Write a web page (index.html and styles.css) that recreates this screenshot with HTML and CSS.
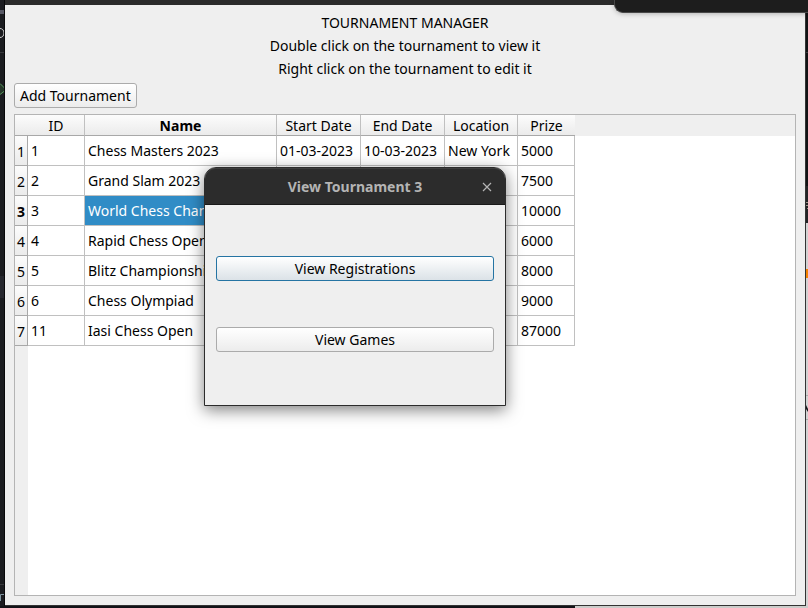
FILE: index.html
```html
<!DOCTYPE html>
<html lang="en">
<head>
<meta charset="utf-8">
<title>Tournament Manager</title>
<link rel="stylesheet" href="styles.css">
</head>
<body>
<div class="desktop">
  <svg class="edge edge-left" width="5" height="608" aria-hidden="true">
    <rect width="5" height="608" fill="#1b1c20"/>
    <rect y="10" width="4" height="4" fill="#585965"/>
    <path d="M0 28.500C2 28.500 4 30 4 33s-2 4.500-4 4.500" fill="none" stroke="#d0d0d0"/>
    <rect y="52" width="4" height="1" fill="#38393d"/>
    <path d="M0 83.500L4.500 88v3L0 94.500" fill="#253629" stroke="#57965c"/>
    <rect y="276" width="4" height="22" fill="#26272e"/>
    <rect y="584" width="4" height="1" fill="#38393d"/>
    <path d="M.5 601v-6.500H4" fill="none" stroke="#7f95a0"/>
    <rect x="4" width="1" height="608" fill="#08080a"/>
  </svg>
  <main class="window">
    <header class="intro">
      <div>TOURNAMENT MANAGER</div>
      <div>Double click on the tournament to view it</div>
      <div>Right click on the tournament to edit it</div>
    </header>
    <button class="button add" type="button">Add Tournament</button>
    <div class="frame">
      <table class="grid">
        <colgroup><col class="c-row"><col class="c-id"><col class="c-name"><col class="c-date"><col class="c-date"><col class="c-place"><col class="c-prize"></colgroup>
        <thead>
          <tr><td class="corner"></td><th scope="col">ID</th><th scope="col" class="active">Name</th><th scope="col">Start Date</th><th scope="col">End Date</th><th scope="col">Location</th><th scope="col" class="last">Prize</th></tr>
        </thead>
        <tbody>
          <tr><th scope="row">1</th><td>1</td><td>Chess Masters 2023</td><td>01-03-2023</td><td>10-03-2023</td><td>New York</td><td>5000</td></tr>
          <tr><th scope="row">2</th><td>2</td><td>Grand Slam 2023</td><td></td><td></td><td></td><td>7500</td></tr>
          <tr><th scope="row" class="active">3</th><td>3</td><td class="selected">World Chess Championship</td><td></td><td></td><td></td><td>10000</td></tr>
          <tr><th scope="row">4</th><td>4</td><td>Rapid Chess Open</td><td></td><td></td><td></td><td>6000</td></tr>
          <tr><th scope="row">5</th><td>5</td><td>Blitz Championship</td><td></td><td></td><td></td><td>8000</td></tr>
          <tr><th scope="row">6</th><td>6</td><td>Chess Olympiad</td><td></td><td></td><td></td><td>9000</td></tr>
          <tr><th scope="row">7</th><td>11</td><td>Iasi Chess Open</td><td></td><td></td><td></td><td>87000</td></tr>
        </tbody>
      </table>
    </div>
  </main>
  <svg class="edge edge-right" width="2" height="608" aria-hidden="true">
    <rect width="2" height="608" fill="#d2d2d2"/>
    <rect width="2" height="223" fill="#111214"/>
    <rect y="52" width="2" height="1" fill="#38393d"/>
    <rect y="186" width="2" height="37" fill="#222325"/>
    <path d="M0 202.500h2M0 205.500h2M1 208.500h1" stroke="#9c9489"/>
    <rect y="269" width="2" height="9" fill="#f58200"/>
    <rect y="395" width="2" height="1" fill="#aaa"/>
    <path d="M0 405l2 4v3l-2-3z" fill="#18171c"/>
    <rect y="419" width="2" height="1" fill="#aaa"/>
  </svg>
  <div class="panel"></div>
  <section class="dialog" role="dialog" aria-labelledby="dialog-title">
    <header class="titlebar">
      <h2 id="dialog-title">View Tournament 3</h2>
      <button class="close" type="button" aria-label="Close">
        <svg width="10" height="10" viewBox="0 0 10 10"><path d="M1 1l8 8M9 1L1 9" fill="none" stroke="#b4b4b4" stroke-width="1.200"/></svg>
      </button>
    </header>
    <div class="choices">
      <button class="button focused" type="button">View Registrations</button>
      <button class="button" type="button">View Games</button>
    </div>
  </section>
</div>
</body>
</html>
```
FILE: styles.css
```css
* { box-sizing: border-box; }

body {
  margin: 0;
  font: 14px/23px "Noto Sans", sans-serif;
  color: #000;
}

.desktop {
  position: relative;
  display: grid;
  grid-template-columns: 5px 1fr 2px;
  height: 100vh;
  padding-bottom: 2px;
  overflow: hidden;
  background: linear-gradient(90deg, #121317 575px, #cbccca 575px);
}

.edge {
  display: block;
  height: 0;
  min-height: 100%;
}

.window {
  display: flex;
  flex-direction: column;
  min-width: 0;
  padding: 6px 9px 9px;
  border-top: 5px solid #2b2b2b;
  border-right: 1px solid #333;
  border-bottom: 1px solid #333;
  background: #efefef;
}

.intro { text-align: center; }

.button {
  height: 25px;
  padding: 0 5px;
  border: 1px solid #ababab;
  border-radius: 3px;
  background: linear-gradient(#fff, #ececec);
  font: inherit;
  color: inherit;
}

.add {
  align-self: flex-start;
  margin: 3px 0 6px;
}

.frame {
  flex: 1;
  min-height: 0;
  border: 1px solid #b4b4b4;
  background:
    linear-gradient(#efefef, #efefef) 0 0 / 100% 21px no-repeat,
    linear-gradient(#efefef, #efefef) 0 0 / 13px 100% no-repeat,
    #fff;
}

.grid {
  width: 560px;
  table-layout: fixed;
  border-collapse: separate;
  border-spacing: 0;
  line-height: 18px;
}

.c-row { width: 13px; }
.c-id, .c-prize { width: 57px; }
.c-name { width: 192px; }
.c-date { width: 84px; }
.c-place { width: 73px; }

.grid th, .grid td {
  padding: 0;
  border: solid #c0c0c0;
  border-width: 0 1px 1px 0;
  font-weight: 400;
  white-space: nowrap;
}

.grid thead th, .grid thead td {
  height: 21px;
  border-bottom-color: #a8a8a8;
  background: linear-gradient(#fcfcfc, #ebebeb);
}

.grid thead .corner, .grid thead .last { border-right: 0; }

.grid tbody th, .grid tbody td { height: 30px; }

.grid tbody th {
  border-color: #a8a8a8;
  background: linear-gradient(#fcfcfc, #ebebeb);
}

.grid thead th, .grid tbody th { padding-top: 2px; }

.grid tbody td {
  padding-left: 3px;
  overflow: hidden;
}

.grid th.active { font-weight: 700; }

.grid td.selected {
  background: #308cc6;
  color: #fff;
}

.panel {
  position: absolute;
  top: 0;
  left: 614px;
  right: 0;
  height: 13px;
  border: solid #484848;
  border-width: 0 0 1px 1px;
  border-bottom-left-radius: 9px;
  background: #1d1d1d;
  box-shadow: 0 1px 5px rgba(0, 0, 0, .25);
}

.dialog {
  position: absolute;
  top: 167px;
  left: 204px;
  width: 302px;
  border: 1px solid #2c2c2c;
  border-radius: 12px 12px 0 0;
  background: #efefef;
  box-shadow: 0 4px 16px rgba(0, 0, 0, .5);
}

.titlebar {
  display: grid;
  grid-template-columns: 36px 1fr 36px;
  align-items: center;
  height: 37px;
  padding-top: 1px;
  border-bottom: 1px solid #191919;
  border-radius: 11px 11px 0 0;
  background: #2c2c2c;
  box-shadow: inset 0 1px #3d3d3d;
}

.titlebar h2 {
  grid-column: 2;
  margin: 0;
  font-size: 14px;
  line-height: 21px;
  text-align: center;
  color: #b4b4b4;
}

.close {
  display: grid;
  place-items: center;
  width: 36px;
  height: 35px;
  padding: 0;
  border: 0;
  background: none;
}

.choices {
  display: flex;
  flex-direction: column;
  gap: 46px;
  padding: 51px 11px 53px;
}

.focused {
  border-color: #2574a3;
  background: linear-gradient(#fff, #dbe2e7);
}
```
